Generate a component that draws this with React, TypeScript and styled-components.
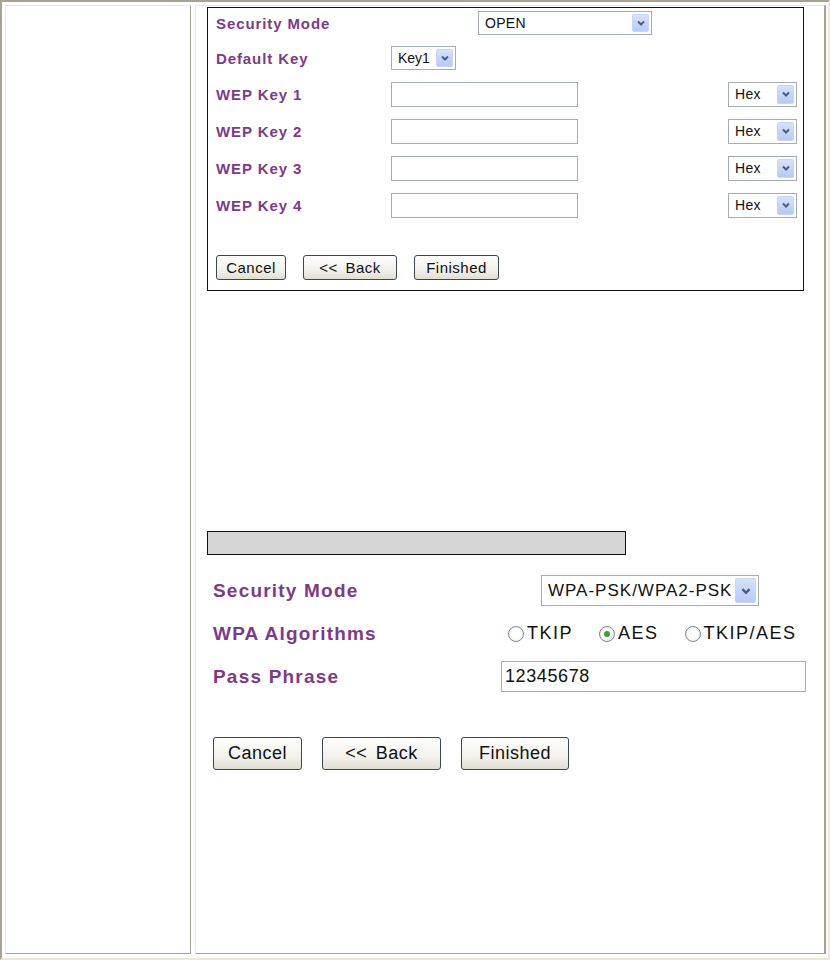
import React from "react";
import styled, { createGlobalStyle } from "styled-components";

const Global = createGlobalStyle`
  html, body { margin: 0; padding: 0; background: #fff; }
  body { font-family: "Liberation Sans", Arial, sans-serif; }
`;

const Frame = styled.div`
  box-sizing: border-box;
  width: 830px;
  height: 960px;
  border-style: solid;
  border-width: 2px;
  border-color: #a6a394 #ece9d8 #ece9d8 #a6a394;
  padding: 3px 2px 4px 3px;
  display: flex;
  gap: 4px;
  background: #fff;
`;

const SideCell = styled.div`
  box-sizing: border-box;
  width: 186px;
  flex: none;
  border-style: solid;
  border-width: 1px;
  border-color: #ece9d8 #a6a394 #a6a394 #ece9d8;
`;

const MainCell = styled.div`
  box-sizing: border-box;
  flex: 1;
  border-style: solid;
  border-width: 1px 2px 1px 1px;
  border-color: #ece9d8 #a6a394 #a6a394 #ece9d8;
  padding: 1px 0 0 11px;
  display: flex;
  flex-direction: column;
`;

const WepPanel = styled.div`
  box-sizing: border-box;
  width: 597px;
  height: 284px;
  border: 1px solid #111;
  padding: 3px 0 0 8px;
  display: flex;
  flex-direction: column;
  gap: 11px;
`;

const FieldRow = styled.div<{ $h: number }>`
  display: flex;
  align-items: center;
  height: ${(p) => p.$h}px;
`;

const Label = styled.div<{ $w: number; $big?: boolean }>`
  width: ${(p) => p.$w}px;
  flex: none;
  color: #7d3a8a;
  font-weight: bold;
  font-size: ${(p) => (p.$big ? 19 : 15)}px;
  letter-spacing: ${(p) => (p.$big ? 1.2 : 0.9)}px;
  white-space: nowrap;
`;

const SelectBox = styled.div<{ $w: number; $h: number; $fs: number }>`
  box-sizing: border-box;
  width: ${(p) => p.$w}px;
  height: ${(p) => p.$h}px;
  flex: none;
  border: 1px solid #a5acb2;
  background: #fff;
  display: flex;
  align-items: stretch;
  padding: 2px;
  font-size: ${(p) => p.$fs}px;
  color: #111;
`;

const SelectText = styled.span<{ $ls?: number }>`
  flex: 1;
  display: flex;
  align-items: center;
  padding-left: 4px;
  letter-spacing: ${(p) => p.$ls ?? 0}px;
  white-space: nowrap;
  overflow: hidden;
`;

const ArrowBtn = styled.span<{ $w: number }>`
  box-sizing: border-box;
  width: ${(p) => p.$w}px;
  flex: none;
  background: linear-gradient(#d6e2fc, #b7caf4);
  border: 1px solid #c6d5f7;
  border-radius: 2px;
  display: flex;
  align-items: center;
  justify-content: center;
`;

const TextBox = styled.div<{ $w: number; $h: number; $fs?: number }>`
  box-sizing: border-box;
  width: ${(p) => p.$w}px;
  height: ${(p) => p.$h}px;
  flex: none;
  border: 1px solid #a5acb2;
  background: #fff;
  display: flex;
  align-items: center;
  padding-left: 3px;
  font-size: ${(p) => p.$fs ?? 14}px;
  letter-spacing: 0.6px;
  color: #111;
`;

const Spacer = styled.div<{ $w: number }>`
  width: ${(p) => p.$w}px;
  flex: none;
`;

const ButtonRow = styled.div<{ $gap: number; $mt: number }>`
  display: flex;
  gap: ${(p) => p.$gap}px;
  margin-top: ${(p) => p.$mt}px;
`;

const Button = styled.button<{ $w: number; $h: number; $fs: number }>`
  box-sizing: border-box;
  width: ${(p) => p.$w}px;
  height: ${(p) => p.$h}px;
  padding: 0;
  border: 1px solid #3b4654;
  border-radius: 3px;
  background: linear-gradient(#fefefd, #f2f1ec 60%, #e1ded3);
  font-family: "Liberation Sans", Arial, sans-serif;
  font-size: ${(p) => p.$fs}px;
  letter-spacing: 0.5px;
  color: #111;
  word-spacing: 3px;
`;

const TitleBar = styled.div`
  box-sizing: border-box;
  width: 419px;
  height: 24px;
  margin-top: 240px;
  border: 1px solid #111;
  background: #d6d6d6;
`;

const WpaForm = styled.div`
  display: flex;
  flex-direction: column;
  gap: 12px;
  padding-left: 6px;
  margin-top: 20px;
`;

const RadioGroup = styled.div`
  display: flex;
  align-items: center;
  gap: 26px;
  font-size: 18px;
  letter-spacing: 1.5px;
  color: #111;
`;

const RadioOption = styled.label`
  display: flex;
  align-items: center;
  gap: 3px;
`;

const RadioCircle = styled.span<{ $on?: boolean }>`
  box-sizing: border-box;
  width: 16px;
  height: 16px;
  border-radius: 50%;
  border: 1px solid #7d8a96;
  background: radial-gradient(circle, #fff 40%, #e6e6e0);
  display: flex;
  align-items: center;
  justify-content: center;
  &::after {
    content: "";
    display: ${(p) => (p.$on ? "block" : "none")};
    width: 6px;
    height: 6px;
    border-radius: 50%;
    background: #33a333;
  }
`;

const Chevron = ({ size }: { size: number }) => (
  <svg width={size} height={size} viewBox="0 0 10 10">
    <polyline points="2,3.5 5,6.5 8,3.5" fill="none" stroke="#4a5f86" strokeWidth="2" />
  </svg>
);

type SelProps = { w: number; h: number; fs: number; value: string; arrow: number; ls?: number; chev?: number };
const Select = ({ w, h, fs, value, arrow, ls, chev }: SelProps) => (
  <SelectBox $w={w} $h={h} $fs={fs}>
    <SelectText $ls={ls}>{value}</SelectText>
    <ArrowBtn $w={arrow}>
      <Chevron size={chev ?? 10} />
    </ArrowBtn>
  </SelectBox>
);

const keys = ["WEP Key 1", "WEP Key 2", "WEP Key 3", "WEP Key 4"];

export default function App() {
  return (
    <>
      <Global />
      <Frame>
        <SideCell />
        <MainCell>
          <WepPanel>
            <FieldRow $h={24}>
              <Label $w={262}>Security Mode</Label>
              <Select w={174} h={24} fs={14} ls={0.3} value="OPEN" arrow={17} />
            </FieldRow>
            <FieldRow $h={24}>
              <Label $w={175}>Default Key</Label>
              <Select w={65} h={24} fs={14} value="Key1" arrow={17} />
            </FieldRow>
            {keys.map((k) => (
              <FieldRow $h={26} key={k}>
                <Label $w={175}>{k}</Label>
                <TextBox $w={187} $h={25} />
                <Spacer $w={150} />
                <Select w={69} h={25} fs={14} ls={0.3} value="Hex" arrow={17} />
              </FieldRow>
            ))}
            <ButtonRow $gap={17} $mt={26}>
              <Button $w={70} $h={25} $fs={15}>Cancel</Button>
              <Button $w={94} $h={25} $fs={15}>&lt;&lt; Back</Button>
              <Button $w={85} $h={25} $fs={15}>Finished</Button>
            </ButtonRow>
          </WepPanel>

          <TitleBar />

          <WpaForm>
            <FieldRow $h={31}>
              <Label $w={328} $big>Security Mode</Label>
              <Select w={218} h={31} fs={17} ls={1} value="WPA-PSK/WPA2-PSK" arrow={21} chev={12} />
            </FieldRow>
            <FieldRow $h={31}>
              <Label $w={295} $big>WPA Algorithms</Label>
              <RadioGroup>
                <RadioOption>
                  <RadioCircle />
                  TKIP
                </RadioOption>
                <RadioOption>
                  <RadioCircle $on />
                  AES
                </RadioOption>
                <RadioOption>
                  <RadioCircle />
                  TKIP/AES
                </RadioOption>
              </RadioGroup>
            </FieldRow>
            <FieldRow $h={31}>
              <Label $w={288} $big>Pass Phrase</Label>
              <TextBox $w={305} $h={31} $fs={18}>12345678</TextBox>
            </FieldRow>
            <ButtonRow $gap={20} $mt={33}>
              <Button $w={89} $h={33} $fs={18}>Cancel</Button>
              <Button $w={119} $h={33} $fs={18}>&lt;&lt; Back</Button>
              <Button $w={108} $h={33} $fs={18}>Finished</Button>
            </ButtonRow>
          </WpaForm>
        </MainCell>
      </Frame>
    </>
  );
}
